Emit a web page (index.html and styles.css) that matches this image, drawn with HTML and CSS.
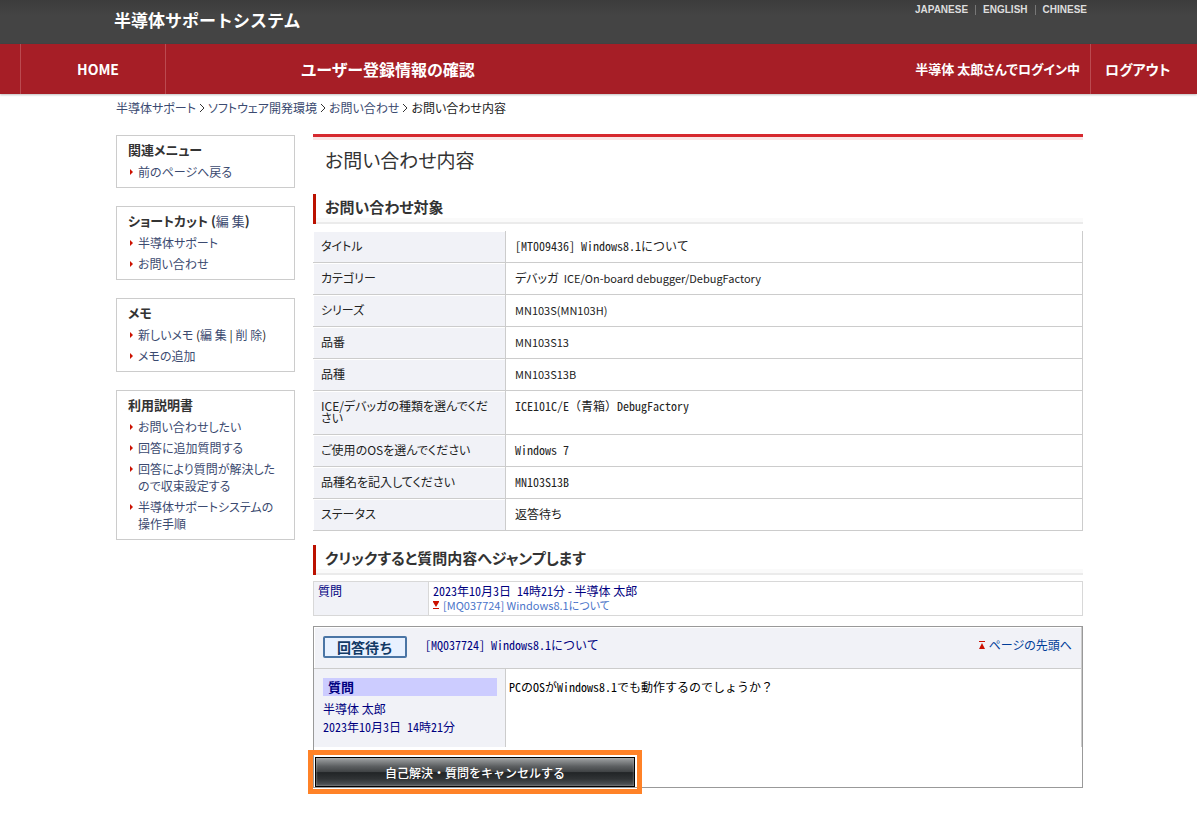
FILE: index.html
```html
<!DOCTYPE html>
<html lang="ja">

<head>
  <meta charset="UTF-8">
  <meta name="viewport" content="width=device-width, initial-scale=1.0">
  <title>お問い合わせ内容</title>
  <link rel="stylesheet" href="styles.css">
</head>

<body id="top">
  <header class="site-header">
    <div class="header-inner">
      <div class="site-title">半導体サポートシステム</div>
      <ul class="languages">
        <li><a href="#">JAPANESE</a></li>
        <li><a href="#">ENGLISH</a></li>
        <li><a href="#">CHINESE</a></li>
      </ul>
    </div>
  </header>
  <nav class="global-nav">
    <a class="nav-home" href="#">HOME</a>
    <a class="nav-user" href="#">ユーザー登録情報の確認</a>
    <span class="nav-login">半導体 太郎さんでログイン中</span>
    <a class="nav-logout" href="#">ログアウト</a>
  </nav>

  <div class="wrapper">
    <div class="breadcrumb">
      <a href="#">半導体サポート</a>
      <svg class="chevron" viewBox="0 0 6 10"><path d="M1 1l4 4-4 4" /></svg>
      <a href="#">ソフトウェア開発環境</a>
      <svg class="chevron" viewBox="0 0 6 10"><path d="M1 1l4 4-4 4" /></svg>
      <a href="#">お問い合わせ</a>
      <svg class="chevron" viewBox="0 0 6 10"><path d="M1 1l4 4-4 4" /></svg>
      <span>お問い合わせ内容</span>
    </div>

    <div class="columns">
      <aside class="sidebar">
        <div class="side-box">
          <h3>関連メニュー</h3>
          <ul>
            <li><a href="#">前のページへ戻る</a></li>
          </ul>
        </div>
        <div class="side-box">
          <h3>ショートカット (<a href="#">編 集</a>)</h3>
          <ul>
            <li><a href="#">半導体サポート</a></li>
            <li><a href="#">お問い合わせ</a></li>
          </ul>
        </div>
        <div class="side-box">
          <h3>メモ</h3>
          <ul>
            <li><a href="#">新しいメモ</a> (<a href="#">編 集</a> | <a href="#">削 除</a>)</li>
            <li><a href="#">メモの追加</a></li>
          </ul>
        </div>
        <div class="side-box">
          <h3>利用説明書</h3>
          <ul>
            <li><a href="#">お問い合わせしたい</a></li>
            <li><a href="#">回答に追加質問する</a></li>
            <li><a href="#">回答により質問が解決した<br>ので収束設定する</a></li>
            <li><a href="#">半導体サポートシステムの<br>操作手順</a></li>
          </ul>
        </div>
      </aside>

      <main>
        <h1>お問い合わせ内容</h1>

        <h2>お問い合わせ対象</h2>
        <table class="detail">
          <tr>
            <th scope="row">タイトル</th>
            <td class="mono">[MT009436] Windows8.1について</td>
          </tr>
          <tr>
            <th scope="row">カテゴリー</th>
            <td>デバッガ&nbsp; <span class="latin">ICE/On-board debugger/DebugFactory</span></td>
          </tr>
          <tr>
            <th scope="row">シリーズ</th>
            <td class="latin">MN103S(MN103H)</td>
          </tr>
          <tr>
            <th scope="row">品番</th>
            <td class="latin">MN103S13</td>
          </tr>
          <tr>
            <th scope="row">品種</th>
            <td class="latin">MN103S13B</td>
          </tr>
          <tr>
            <th scope="row">ICE/デバッガの種類を選んでくだ<br>さい</th>
            <td class="mono">ICE101C/E<span class="wide">（青箱）</span>DebugFactory</td>
          </tr>
          <tr>
            <th scope="row">ご使用のOSを選んでください</th>
            <td class="mono">Windows 7</td>
          </tr>
          <tr>
            <th scope="row">品種名を記入してください</th>
            <td class="mono">MN103S13B</td>
          </tr>
          <tr>
            <th scope="row">ステータス</th>
            <td>返答待ち</td>
          </tr>
        </table>

        <h2>クリックすると質問内容へジャンプします</h2>
        <table class="jump">
          <tr>
            <th scope="row">質問</th>
            <td>
              <div><span class="mono">2023年10月3日 14時21分</span> - 半導体 太郎</div>
              <a class="latin" href="#question">
                <svg class="jump-icon" viewBox="0 0 6 8"><path d="M0 0h6v1H0zM0 1h6L3 6zM0 7h6v1H0z" /></svg>
                [MQ037724] Windows8.1について</a>
            </td>
          </tr>
        </table>

        <section class="question" id="question">
          <div class="question-head">
            <span class="status">回答待ち</span>
            <span class="question-title mono">[MQ037724] Windows8.1について</span>
            <a class="to-top" href="#top">
              <svg class="jump-icon" viewBox="0 0 6 8"><path d="M0 0h6v1H0zM3 2l3 6H0z" /></svg>
              ページの先頭へ</a>
          </div>
          <div class="question-body">
            <div class="question-meta">
              <div class="kind">質問</div>
              <div>半導体 太郎</div>
              <div class="mono">2023年10月3日 14時21分</div>
            </div>
            <div class="question-text mono">PCのOSがWindows8.1でも動作するのでしょうか<span class="wide">？</span></div>
          </div>
          <div class="question-foot">
            <button type="button" class="cancel-button">自己解決・質問をキャンセルする</button>
          </div>
        </section>
      </main>
    </div>
  </div>
</body>

</html>
```

FILE: styles.css
```css
:root {
  --text: #222222;
  --link: #3b4a70;
  --navy: #000080;
  --red: #a61e26;
  --accent: #bb1100;
  --line: #cccccc;
  --panel: #f1f2f7;
}

* {
  box-sizing: border-box;
}

body {
  margin: 0;
  background-color: #ffffff;
  color: var(--text);
  font-family: "Noto Sans CJK JP", sans-serif;
  font-size: 12px;
  line-height: 14px;
  font-feature-settings: "palt";
}

a {
  color: var(--link);
  text-decoration: none;
}

ul {
  list-style: none;
  margin: 0;
  padding: 0;
}

/* half-width latin beside full-width kana */
.mono {
  font-feature-settings: "hwid";
}

.wide {
  font-feature-settings: normal;
}

.latin {
  font-size: 11px;
}

/* header */
.site-header {
  height: 44px;
  background: linear-gradient(#3c3c3c, #444444 16px);
}

.header-inner {
  display: flex;
  align-items: flex-start;
  justify-content: space-between;
  max-width: 977px;
  margin: 0 auto;
  padding-left: 4px;
}

.site-title {
  color: #ffffff;
  font-size: 17px;
  font-weight: bold;
  line-height: 40px;
  font-feature-settings: normal;
}

.languages {
  display: flex;
  padding-top: 5px;
  font-family: "Liberation Sans", sans-serif;
  font-size: 10px;
  font-weight: bold;
  line-height: 10px;
}

.languages li + li {
  margin-left: 7px;
  padding-left: 7px;
  border-left: 1px solid #777777;
}

.languages a {
  color: #dddddd;
}

.global-nav {
  display: flex;
  height: 50px;
  padding-left: 20px;
  background-color: var(--red);
  box-shadow: 0 1px 2px rgba(0, 0, 0, 0.25);
  color: #ffffff;
  font-size: 14px;
  font-weight: bold;
  line-height: 50px;
}

.global-nav a {
  color: #ffffff;
}

.nav-home {
  width: 146px;
  padding-left: 10px;
  border: solid #bb4a50;
  border-width: 0 1px;
  text-align: center;
}

.nav-user {
  padding-left: 135px;
  font-size: 16px;
}

.nav-login {
  margin-left: auto;
  padding-right: 10px;
  font-size: 13px;
}

.nav-logout {
  width: 107px;
  padding-left: 14px;
  border-left: 1px solid #bb4a50;
}

.wrapper {
  max-width: 969px;
  margin: 0 auto;
  padding: 0 0 40px 2px;
}

.breadcrumb {
  display: flex;
  align-items: center;
  gap: 3px;
  padding: 7px 0;
}

.chevron {
  width: 6px;
  height: 10px;
  fill: none;
  stroke: #333333;
}

.columns {
  display: grid;
  grid-template-columns: 179px 1fr;
  gap: 18px;
  align-items: start;
  padding-top: 12px;
}

/* sidebar */
.sidebar {
  display: grid;
  gap: 18px;
  padding-top: 1px;
}

.side-box {
  padding: 5px 8px 7px 11px;
  border: 1px solid var(--line);
  line-height: 17px;
}

.side-box h3 {
  margin: 0 0 5px;
  color: #333333;
  font-size: 13px;
}

.side-box h3 a {
  font-weight: normal;
}

.side-box ul {
  display: grid;
  gap: 4px;
}

.side-box li {
  position: relative;
  padding-left: 10px;
}

.side-box li::before {
  content: "";
  position: absolute;
  top: 6px;
  left: 2px;
  border: solid transparent;
  border-width: 3px 0 3px 3px;
  border-left-color: #cc1100;
}

/* main column */
h1 {
  margin: 0 0 11px;
  padding: 0 12px;
  border-top: 3px solid #d6292f;
  box-shadow: inset 0 3px #fae6e6;
  color: #333333;
  font-size: 19px;
  font-weight: normal;
  line-height: 46px;
}

h2 {
  height: 30px;
  margin: 0;
  padding-left: 9px;
  border-left: 3px solid var(--accent);
  background: linear-gradient(#ffffff 24px, #fafafa 24px, #fafafa 28px, #ebebeb 28px);
  color: #333333;
  font-size: 15px;
  line-height: 26px;
}

table {
  width: 100%;
  border-collapse: separate;
  border-spacing: 0;
}

th {
  background-color: var(--panel);
  font-weight: normal;
  text-align: left;
}

th,
td {
  vertical-align: top;
}

.detail {
  margin: 7px 0 14px;
  line-height: 12px;
}

.detail th,
.detail td {
  padding: 9px 8px 10px;
  border: solid var(--line);
  border-width: 0 1px 1px 0;
}

.detail th {
  width: 193px;
  box-shadow: inset 1px 1px #ffffff;
}

.detail td {
  padding-left: 9px;
}

.jump {
  margin: 6px 0 10px;
  border: 1px solid #d8d8d8;
  color: var(--navy);
}

.jump th,
.jump td {
  padding: 2px 4px 3px;
}

.jump th {
  width: 115px;
  border-right: 1px solid #d8d8d8;
}

.jump a {
  display: flex;
  align-items: center;
  gap: 4px;
  color: #4a74c9;
}

.jump-icon {
  width: 6px;
  height: 8px;
  fill: #cc1100;
}

.question {
  border: 1px solid #999999;
  color: var(--navy);
}

.question-head {
  display: flex;
  align-items: flex-start;
  gap: 18px;
  padding: 9px 9px 10px;
  border: solid var(--line);
  border-width: 0 1px 1px 0;
  background-color: var(--panel);
  box-shadow: inset 1px 1px #ffffff;
}

.status {
  width: 84px;
  border: 2px solid #4a75a5;
  border-radius: 2px;
  background-color: #e8f1ff;
  color: #123a66;
  font-size: 14px;
  font-weight: bold;
  line-height: 18px;
  text-align: center;
  font-feature-settings: normal;
}

.question-title,
.to-top {
  line-height: 18px;
}

.to-top {
  display: flex;
  align-items: center;
  gap: 4px;
  margin-left: auto;
  color: #003d99;
}

.question-body {
  display: grid;
  grid-template-columns: 192px 1fr;
  border-right: 1px solid var(--line);
}

.question-meta {
  padding: 9px 8px 11px 9px;
  border-right: 1px solid var(--line);
  background-color: var(--panel);
  line-height: 18px;
}

.kind {
  margin-bottom: 4px;
  padding-left: 5px;
  background-color: #ccccff;
  font-size: 13px;
  font-weight: bold;
}

.question-text {
  padding: 9px 3px;
  color: #000000;
  line-height: 18px;
}

.question-foot {
  padding: 10px 0 0 1px;
}

.cancel-button {
  display: block;
  width: 320px;
  height: 30px;
  border: 1px solid #000000;
  outline: 5px solid #ff8227;
  outline-offset: 2px;
  background: linear-gradient(#a0a3a4, #5c5f61 30%, #3f4244 50%, #222527 52%, #303335 75%, #55595c);
  box-shadow: inset 0 0 2px #bbbbbb;
  color: #ffffff;
  font-family: inherit;
  font-size: 12px;
  font-weight: 500;
}
```
